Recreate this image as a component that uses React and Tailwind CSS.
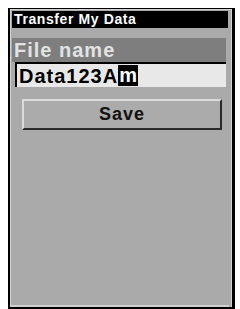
export default function App() {
  return (
    <div className="w-[240px] h-[309px] bg-white pt-[8px] pl-[8px] font-['Liberation_Sans',Arial,sans-serif]">
      <div className="w-[227px] h-[301px] bg-black pl-[2px] pr-[3px] pt-[1px] pb-[2px]">
        <div className="h-full bg-[#aaaaaa] border-x border-t border-[#d2d2d2] flex flex-col pl-[1px] pr-[3px]">
          <div className="h-[17px] mt-[1px] bg-black text-white text-[14px] font-bold leading-[17px] pl-[2px] tracking-[0.6px]">
            Transfer My Data
          </div>
          <div className="h-[10px]" />
          <div className="h-[24px] bg-[#7e7e7e] text-[#e2e2e2] text-[20px] font-bold leading-[24px] pl-[2px] tracking-[1px] mr-[2px]">
            File name
          </div>
          <div className="ml-[3px] mr-[2px] h-[25px] bg-[#e8e8e8] border-l-2 border-t-2 border-black flex items-center pl-[2px] text-[20px] font-bold text-black tracking-[1px] leading-none">
            <span>Data123A</span>
            <span className="bg-black text-white pl-[1px] h-[21px] leading-[20px]">m</span>
          </div>
          <div className="mt-[12px] ml-[10px] mr-[6px] h-[31px] bg-[#ababab] border-l-2 border-t-2 border-[#dcdcdc] border-r-2 border-b-2 border-r-[#2a2a2a] border-b-[#2a2a2a] flex items-center justify-center text-[18px] font-bold text-[#111] tracking-[1px]">
            Save
          </div>
          <div className="flex-1" />
          <div className="h-[2px] bg-[#d0d0d0] mx-[-1px]" />
        </div>
      </div>
    </div>
  )
}
